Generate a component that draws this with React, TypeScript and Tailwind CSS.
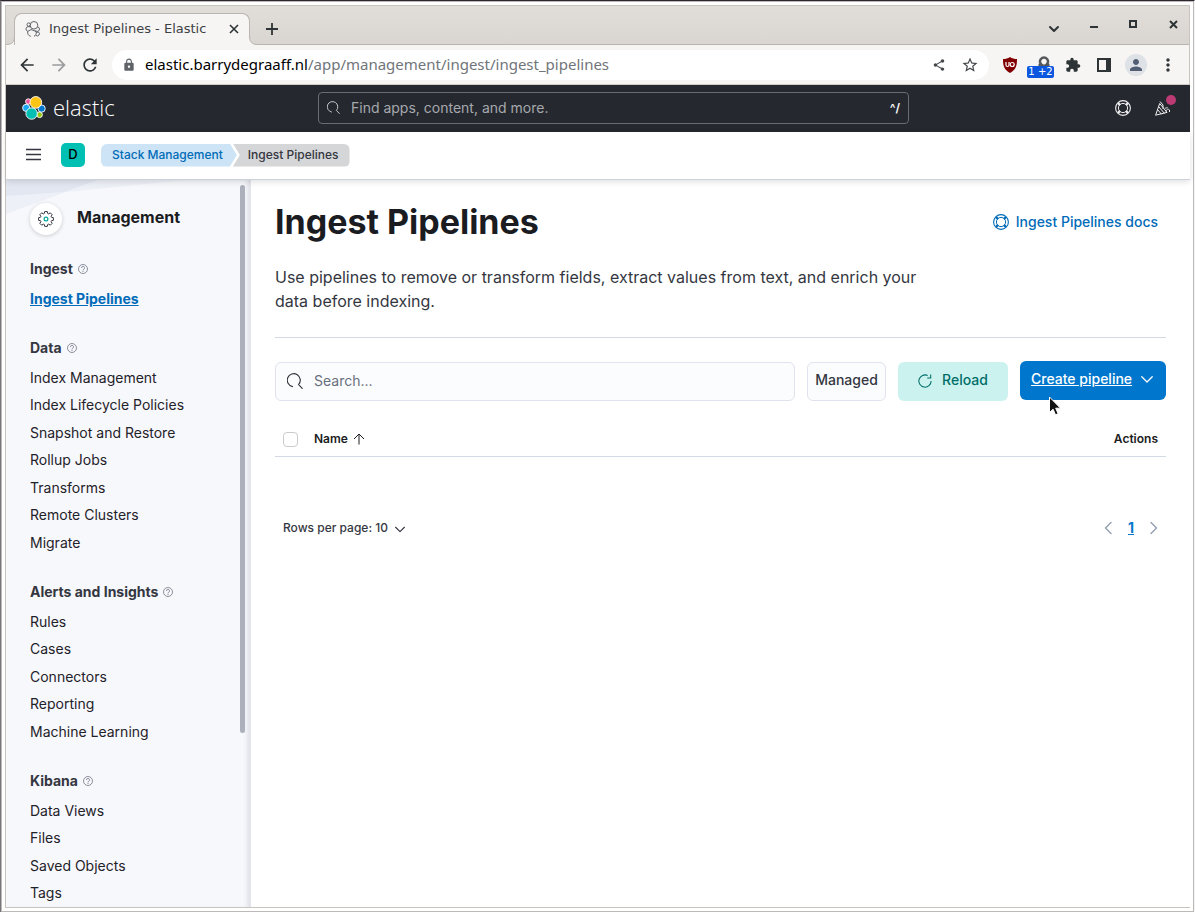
import React from "react";
import type { ReactNode } from "react";
import { MdArrowBack, MdArrowForward, MdRefresh, MdLock, MdShare, MdStarBorder, MdExtension, MdPerson, MdMoreVert } from "react-icons/md";

type Group = { title: string; items: string[] };

const groups: Group[] = [
  { title: "Ingest", items: ["Ingest Pipelines"] },
  {
    title: "Data",
    items: [
      "Index Management",
      "Index Lifecycle Policies",
      "Snapshot and Restore",
      "Rollup Jobs",
      "Transforms",
      "Remote Clusters",
      "Migrate",
    ],
  },
  { title: "Alerts and Insights", items: ["Rules", "Cases", "Connectors", "Reporting", "Machine Learning"] },
  { title: "Kibana", items: ["Data Views", "Files", "Saved Objects", "Tags"] },
];

function SearchIcon({ className }: { className: string }) {
  return (
    <svg viewBox="0 0 16 16" className={className} fill="none" stroke="currentColor" aria-hidden="true">
      <path d="M5.5 13.6A6.5 6.5 0 1 1 11.6 11.6L15.2 15.4" strokeLinecap="round" strokeWidth="1.2" />
    </svg>
  );
}

function HelpRing({ className }: { className: string }) {
  return (
    <svg viewBox="0 0 16 16" className={className} fill="none" stroke="currentColor" aria-hidden="true">
      <circle cx="8" cy="8" r="7.4" strokeWidth="1.1" />
      <circle cx="8" cy="8" r="4.6" />
      <path d="M3.1 3.1 5 5M12.9 3.1 11 5M3.1 12.900 5 11M12.900 12.900 11 11" strokeWidth="2.2" />
    </svg>
  );
}

function QuestionIcon() {
  return (
    <svg viewBox="0 0 16 16" className="size-[10px] text-[#696f7d]" fill="none" stroke="currentColor" aria-hidden="true">
      <circle cx="8" cy="8" r="7.2" strokeWidth="1.2" />
      <path d="M5.6 6.3a2.4 2.4 0 1 1 3.5 2.1C8.3 8.8 8 9.2 8 10.2M8 11.3v1.5" strokeWidth="1.3" />
    </svg>
  );
}

function Chevron({ d, className }: { d: string; className: string }) {
  return (
    <svg viewBox="0 0 16 16" className={className} fill="none" stroke="currentColor" strokeLinecap="round" strokeLinejoin="round" aria-hidden="true">
      <path d={d} />
    </svg>
  );
}

function ElasticMark() {
  return (
    <svg viewBox="0 0 32 32" className="size-6" aria-hidden="true">
      <g stroke="#fff" strokeWidth="1.2">
        <circle cx="8.4" cy="7.4" r="3.6" fill="#f04e98" />
        <circle cx="23.4" cy="25" r="3.8" fill="#93c90e" />
        <circle cx="5.6" cy="15.8" r="4.8" fill="#1ba9f5" />
        <circle cx="26.2" cy="16.8" r="4.8" fill="#0077cc" />
        <circle cx="12.800" cy="23.400" r="7.600" fill="#00bfb3" />
        <circle cx="18.400" cy="8.500" r="7.800" fill="#fec514" />
      </g>
    </svg>
  );
}

function ClusterIcon() {
  return (
    <svg viewBox="0 0 16 16" className="size-4 shrink-0" fill="none" stroke="#5f6368" aria-hidden="true">
      <circle cx="9" cy="4.3" r="3.8" />
      <circle cx="3.7" cy="3.6" r="1.7" />
      <path d="M5.5 5.9 3 5.6A2.4 2.4 0 0 0 2.8 10.3L6 8.6M6 8.6l3.6 1.2M12.6 5.8a2.4 2.4 0 0 1 .3 4.6L9.6 9.8M2.8 10.3c-.6 2.4.7 4.6 3 5M9.6 9.8 11.3 11c.2 2-.7 3.6-2.3 4.3M11.3 11l2.5.3a2 2 0 0 1-3 3" />
    </svg>
  );
}

function IconButton({ label, className, children }: { label: string; className: string; children: ReactNode }) {
  return (
    <button type="button" aria-label={label} className={`flex shrink-0 items-center justify-center ${className}`}>
      {children}
    </button>
  );
}

function BrowserChrome() {
  return (
    <div className="shrink-0 border-r border-[#c9c4be]">
      <div className="flex h-[39px] items-end bg-linear-to-b from-[#e1deda] to-[#d9d5d0]">
        <svg viewBox="0 0 9 9" className="size-[9px] shrink-0" aria-hidden="true">
          <path d="M0 9C6 9 8.5 6 8.5 0H9V9z" fill="#f6f5f4" />
          <path d="M0 8.5C6 8.5 8.5 6 8.5 0" fill="none" stroke="#b9b5b0" />
        </svg>
        <div className="-ml-px flex h-8 w-[236px] items-center rounded-t-lg border-x border-t border-[#b9b5b0] bg-[#f6f5f4] pr-[7px] pb-px pl-[10px]">
          <ClusterIcon />
          <span className="ml-2 font-['DejaVu_Sans',sans-serif] text-[13px] whitespace-nowrap text-[#3c4043]">Ingest Pipelines - Elastic</span>
          <IconButton label="Close tab" className="ml-auto size-4 text-[#2e3436]">
            <svg viewBox="0 0 16 16" className="size-4" stroke="currentColor" strokeWidth="1.6" aria-hidden="true">
              <path d="M4 4l8 8M12 4l-8 8" />
            </svg>
          </IconButton>
        </div>
        <svg viewBox="0 0 9 9" className="-ml-px size-[9px] shrink-0" aria-hidden="true">
          <path d="M9 9C3 9 .5 6 .5 0H0V9z" fill="#f6f5f4" />
          <path d="M9 8.5C3 8.5 .5 6 .5 0" fill="none" stroke="#b9b5b0" />
        </svg>
        <div className="flex h-full flex-1 items-center border-b border-[#b9b5b0] pr-[7px] pl-[6px] text-[#2e3436]">
          <IconButton label="New tab" className="mt-2 size-4">
            <svg viewBox="0 0 16 16" className="size-4" stroke="currentColor" strokeWidth="1.8" aria-hidden="true">
              <path d="M8 2v12M2 8h12" />
            </svg>
          </IconButton>
          <div className="ml-auto flex items-center gap-6">
            <IconButton label="Search tabs" className="mt-2 size-4">
              <Chevron d="M4 6l4 4 4-4" className="size-4 stroke-2" />
            </IconButton>
            <IconButton label="Minimize" className="size-4">
              <svg viewBox="0 0 16 16" className="size-4" stroke="currentColor" strokeWidth="2" aria-hidden="true">
                <path d="M4 10h8" />
              </svg>
            </IconButton>
            <IconButton label="Maximize" className="size-4">
              <svg viewBox="0 0 16 16" className="size-4" fill="none" stroke="currentColor" strokeWidth="2" aria-hidden="true">
                <path d="M4 4h6v6H4z" />
              </svg>
            </IconButton>
            <IconButton label="Close window" className="size-4">
              <svg viewBox="0 0 16 16" className="size-4" stroke="currentColor" strokeWidth="2" aria-hidden="true">
                <path d="M4 4l7 7M11 4l-7 7" />
              </svg>
            </IconButton>
          </div>
        </div>
      </div>

      <div className="flex h-10 items-center border-b border-[#d0cbc4] bg-[#f6f5f4] pr-[11px] pl-[11px] text-[#2e3436]">
        <IconButton label="Back" className="size-5">
          <MdArrowBack className="size-5" />
        </IconButton>
        <IconButton label="Forward" className="ml-3 size-5 text-[#9a9c9d]">
          <MdArrowForward className="size-5" />
        </IconButton>
        <IconButton label="Reload page" className="ml-[11px] size-5">
          <MdRefresh className="size-5" />
        </IconButton>
        <div className="ml-3 flex h-[30px] flex-1 items-center rounded-full bg-white pr-[10px] pl-[10px]">
          <MdLock className="size-[14px] shrink-0 text-[#5f6368]" />
          <span className="ml-[9px] flex-1 font-['Noto_Sans',sans-serif] text-[15px] whitespace-nowrap text-[#70757a]">
            <span className="text-black">elastic.barrydegraaff.nl</span>/app/management/ingest/ingest_pipelines
          </span>
          <IconButton label="Share" className="size-4 text-[#44484b]">
            <MdShare className="size-[14px]" />
          </IconButton>
          <IconButton label="Bookmark" className="ml-[14px] size-[18px] text-[#44484b]">
            <MdStarBorder className="size-[18px]" />
          </IconButton>
        </div>
        <IconButton label="Content blocker" className="ml-3 size-[18px]">
          <svg viewBox="0 0 18 18" className="size-[18px]" fill="none" aria-hidden="true">
            <path d="M9 1C7 2.500 4.500 3 2 3c0 7 1 10.500 7 14 6-3.500 7-7 7-14-2.500 0-5-.5-7-2z" fill="#800000" />
            <path d="M5 6v3a1.500 1.500 0 0 0 3 0V6" stroke="#fff" strokeWidth="1.200" />
            <circle cx="11.200" cy="8.500" r="2" stroke="#fff" strokeWidth="1.200" />
          </svg>
        </IconButton>
        <button type="button" aria-label="Sessions 1 +2" className="mt-[5px] ml-2 flex w-[27px] shrink-0 flex-col items-center">
          <svg viewBox="0 0 16 10" className="ml-[6px] h-[10px] w-4" fill="none" stroke="#55585a" strokeWidth="2.500" aria-hidden="true">
            <path d="M2.500 9h3.500a4 4 0 1 1 4 0h3.500" />
          </svg>
          <span className="w-full rounded-[2px] bg-[#0b57e0] text-center font-['DejaVu_Sans',sans-serif] text-[10px] leading-3 whitespace-nowrap text-white">1 +2</span>
        </button>
        <IconButton label="Extensions" className="ml-[11px] size-4">
          <MdExtension className="size-4" />
        </IconButton>
        <IconButton label="Side panel" className="ml-[15px] size-4">
          <svg viewBox="0 0 16 16" className="size-4" aria-hidden="true">
            <path fillRule="evenodd" d="M1 1h14v14H1zM3 3v10h7V3z" fill="currentColor" />
          </svg>
        </IconButton>
        <IconButton label="Profile" className="ml-[13px] size-[22px] rounded-full bg-[#dee1e6] text-[#535e74]">
          <MdPerson className="size-[18px]" />
        </IconButton>
        <IconButton label="Browser menu" className="ml-[11px] size-5">
          <MdMoreVert className="size-5" />
        </IconButton>
      </div>
    </div>
  );
}

function KibanaHeader() {
  return (
    <header className="relative z-10 shrink-0">
      <div className="flex h-[47px] items-center bg-[#25282f] pb-[2px]">
        <a href="#home" className="flex w-[312px] shrink-0 items-center gap-[7px] pl-4 text-white">
          <ElasticMark />
          <span className="pb-[2px] font-['Open_Sans',sans-serif] text-[22px] leading-6 font-light">elastic</span>
        </a>
        <label className="flex h-8 min-w-0 flex-1 items-center rounded border border-[#6a6c72] px-2 text-[#c8c9cc]">
          <SearchIcon className="size-[13px] shrink-0" />
          <input
            type="text"
            aria-label="Find apps, content, and more."
            placeholder="Find apps, content, and more."
            className="ml-[11px] min-w-0 flex-1 bg-transparent text-sm outline-none placeholder:text-[#a6a8ad]"
          />
          <span className="text-xs font-semibold text-white">^/</span>
        </label>
        <div className="flex w-[281px] shrink-0 items-center justify-end gap-6 pr-[19px] text-[#f0f0f2]">
          <IconButton label="Help menu" className="size-4">
            <HelpRing className="size-4" />
          </IconButton>
          <button type="button" aria-label="News feed" className="relative size-4">
            <svg viewBox="0 0 16 16" className="size-4" fill="none" stroke="currentColor" strokeLinejoin="round" aria-hidden="true">
              <path d="M.6 15.200 4.700 3.500 12 12.400zM2.500 9.500l4 4.700M3.600 6.500l5.800 6.800M5 1.500l3 3.500v4M11 11.500c.5-2.500 2-3 3.500-1.500v2M10 8c1 .5 1.500-.5 2.500-.5" />
            </svg>
            <span className="absolute -top-[5px] left-[11px] size-[10px] rounded-full bg-[#bd3b74]" />
          </button>
        </div>
      </div>
      <div className="flex h-12 items-center border-b border-[#ccd1dc] bg-white pb-px pl-5 shadow-[0_2px_6px_rgba(0,0,0,0.12)]">
        <IconButton label="Toggle primary navigation" className="size-4 text-[#343741]">
          <svg viewBox="0 0 16 16" className="size-4" stroke="currentColor" strokeWidth="1.500" aria-hidden="true">
            <path d="M0 2.500h15M0 7.500h15M0 12.500h15" />
          </svg>
        </IconButton>
        <button type="button" aria-label="Default space" className="ml-[19px] size-6 rounded-[5px] bg-[#00bfb3] pb-[2px] text-[13px] leading-[22px] font-medium text-black">D</button>
        <nav aria-label="Breadcrumbs" className="ml-4 flex text-xs leading-[21px] font-medium">
          <a href="#management" className="rounded-l-md bg-[#cce4f5] pr-[14px] pb-[2px] pl-[11px] text-[#006bb8] [clip-path:polygon(0_0,calc(100%-7px)_0,100%_50%,calc(100%-7px)_100%,0_100%)]">
            Stack Management
          </a>
          <span className="-ml-1 rounded-r-md bg-[#d5d6d8] pr-[11px] pb-[2px] pl-[15px] text-[#343741] [clip-path:polygon(0_0,100%_0,100%_100%,0_100%,7px_50%)]">
            Ingest Pipelines
          </span>
        </nav>
      </div>
    </header>
  );
}

function Sidebar() {
  return (
    <aside className="relative w-[245px] shrink-0 overflow-hidden border-r border-[#e3e5eb] bg-[#f7f8fc] pt-[23px] pl-6 shadow-[inset_-5px_0_5px_-3px_rgba(50,60,90,0.15)]">
      <svg viewBox="0 0 180 34" className="absolute top-0 left-0 h-[34px] w-[180px]" aria-hidden="true">
        <path d="M0 0h180L60 12 0 34z" fill="#edf0f7" />
        <path d="M0 0h92L58 12 0 16z" fill="#e2e7f1" />
      </svg>
      <span className="absolute top-[5px] right-[5px] h-[548px] w-[5px] rounded-full bg-[#abb0ba]" />
      <div className="relative flex items-center">
        <span className="flex size-8 items-center justify-center rounded-full bg-white shadow-[0_1px_4px_rgba(0,0,0,0.18)]">
          <svg viewBox="0 0 16 16" className="size-4" fill="none" stroke="#343741" aria-hidden="true">
            <path d="M6.700.6h2.600l.4 1.900 1 .4 1.600-1.100 1.900 1.900-1.100 1.600.4 1 1.900.4v2.600l-1.900.4-.4 1 1.100 1.600-1.900 1.900-1.600-1.100-1 .4-.4 1.900H6.700l-.4-1.900-1-.4-1.600 1.100-1.900-1.900 1.100-1.600-.4-1L.6 9.300V6.700l1.900-.4.4-1-1.100-1.600 1.900-1.900 1.600 1.100 1-.4z" />
            <circle cx="8" cy="8" r="1.900" stroke="#00a69b" strokeWidth="1.200" />
          </svg>
        </span>
        <h2 className="mb-1 ml-[15px] text-base font-bold text-[#1a1c21]">Management</h2>
      </div>
      <nav aria-label="Management" className="mt-6 flex flex-col gap-[29px] text-sm leading-5">
        {groups.map((group) => (
          <section key={group.title}>
            <h3 className="flex items-center gap-[5px] font-bold text-[#343741]">
              {group.title}
              <QuestionIcon />
            </h3>
            <ul className="mt-[2px]">
              {group.items.map((item) => (
                <li key={item} className="odd:pt-2 even:pt-[7px]">
                  <a
                    href="#section"
                    aria-current={item === "Ingest Pipelines" ? "page" : undefined}
                    className={item === "Ingest Pipelines" ? "font-bold text-[#006bb8] underline" : "text-[#1f2229]"}
                  >
                    {item}
                  </a>
                </li>
              ))}
            </ul>
          </section>
        ))}
      </nav>
    </aside>
  );
}

function Pipelines() {
  return (
    <main className="min-w-0 flex-1 px-6 pt-[22px]">
      <div className="flex items-center justify-between">
        <h1 className="text-[34px] leading-10 font-bold text-[#1a1c21]">Ingest Pipelines</h1>
        <a href="#docs" className="flex items-center gap-[7px] pr-2 text-sm font-medium text-[#006bb8]">
          <HelpRing className="size-4" />
          Ingest Pipelines docs
        </a>
      </div>
      <p className="mt-[23px] w-3/4 text-base leading-6 text-[#343741]">
        Use pipelines to remove or transform fields, extract values from text, and enrich your data before indexing.
      </p>
      <hr className="mt-6 border-[#d3dae6]" />

      <div className="mt-6 flex items-start gap-3 text-sm">
        <label className="flex h-[39px] min-w-0 flex-1 items-center rounded-md border border-[#e0e3ee] bg-[#fbfcfd] px-[11px] pb-[2px] text-[#343741]">
          <SearchIcon className="size-4 shrink-0" />
          <input type="search" aria-label="Search" placeholder="Search..." className="ml-[11px] min-w-0 flex-1 bg-transparent outline-none placeholder:text-[#69707d]" />
        </label>
        <button type="button" className="h-[39px] w-[79px] rounded-md border border-[#e0e3ee] bg-[#fbfcfd] pb-1 font-medium text-[#343741]">Managed</button>
        <button type="button" className="flex h-[39px] w-[110px] items-center justify-center gap-[10px] rounded-md bg-[#ccf2f0] pb-1 font-medium text-[#006e67]">
          <svg viewBox="0 0 16 16" className="mt-[2px] size-[14px]" fill="none" stroke="currentColor" strokeWidth="1.200" aria-hidden="true">
            <path d="M11 1.700A7 7 0 1 0 15 8M10.500 4.500H14.500V.5" />
          </svg>
          Reload
        </button>
        <button type="button" className="-mt-px flex h-[39px] w-[146px] items-center justify-between rounded-md bg-[#0077cc] pr-3 pb-1 pl-[11px] font-medium text-white">
          <span className="underline">Create pipeline</span>
          <Chevron d="M2 5.500l6 6 6-6" className="size-[14px] stroke-[1.5]" />
        </button>
      </div>

      <table className="mt-5 w-full text-xs font-semibold text-[#1a1c21]">
        <thead>
          <tr className="h-[35px] border-b border-[#d3dae6]">
            <th className="w-[39px] pl-2 text-left">
              <input type="checkbox" aria-label="Select all rows" className="mt-[3px] block size-[15px] appearance-none rounded border border-[#c9cbcd] bg-white" />
            </th>
            <th className="pt-[2px] text-left font-semibold" aria-sort="ascending">
              <button type="button" className="flex items-center gap-[3px]">
                Name
                <svg viewBox="0 0 16 16" className="size-4" fill="none" stroke="currentColor" aria-hidden="true">
                  <path d="M8 13.500V3M3 8l5-5 5 5" />
                </svg>
              </button>
            </th>
            <th className="pt-[2px] pr-2 text-right font-semibold">Actions</th>
          </tr>
        </thead>
      </table>

      <div className="mt-[59px] flex items-center justify-between pr-1 pl-2">
        <button type="button" className="flex items-center gap-[5px] text-xs leading-6 font-medium text-[#343741]">
          Rows per page: 10
          <Chevron d="M3 6l5 5 5-5" className="mt-[2px] size-[14px] stroke-[1.3]" />
        </button>
        <nav aria-label="Pagination" className="flex items-center gap-3 text-sm leading-6 text-[#98a2b3]">
          <IconButton label="Previous page" className="size-4">
            <Chevron d="M11 2.500L5.500 8l5.500 5.500" className="size-4 stroke-[1.5]" />
          </IconButton>
          <a href="#page-1" aria-current="page" className="font-bold text-[#0077cc] underline">1</a>
          <IconButton label="Next page" className="size-4">
            <Chevron d="M5 2.500L10.500 8 5 13.500" className="size-4 stroke-[1.5]" />
          </IconButton>
        </nav>
      </div>
    </main>
  );
}

export default function App() {
  return (
    <div className="h-screen overflow-hidden border-t border-r border-l border-t-[#2b2630] border-r-[#f4f4f4] border-l-[#77757a] font-[Inter,sans-serif]">
      <div className="h-full border border-[#bdb9b6] bg-white p-[3px]">
        <div className="flex h-full flex-col border-t border-b border-l border-[#c9c4be]">
          <BrowserChrome />
          <KibanaHeader />
          <div className="flex min-h-0 flex-1">
            <Sidebar />
            <Pipelines />
          </div>
        </div>
      </div>
      <svg viewBox="0 0 14 22" className="absolute top-[396px] left-[1048px] z-20 h-[22px] w-[14px]" aria-hidden="true">
        <path d="M1.500 1v15.500l3.600-3.300 2.400 5.600 2.600-1.100-2.400-5.500h4.800z" fill="#111" stroke="#fff" />
      </svg>
    </div>
  );
}
